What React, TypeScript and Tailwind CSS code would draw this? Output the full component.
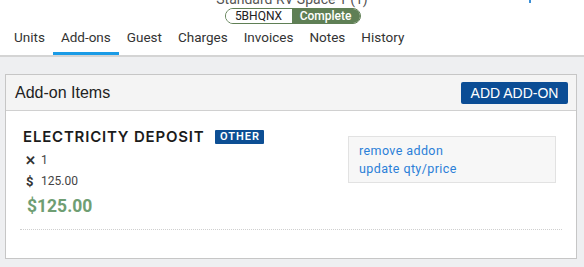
import React from "react";

export default function App() {
  const tabs = ["Units", "Add-ons", "Guest", "Charges", "Invoices", "Notes", "History"];
  return (
    <div className="w-[584px] h-[267px] overflow-hidden bg-[#eeeff1] relative" style={{ fontFamily: "Roboto, 'Open Sans', sans-serif" }}>
      <div className="bg-white border-b-2 border-[#d4d4d4] relative">
        <div className="h-[6px] relative overflow-visible">
          <div className="absolute left-0 right-0 -top-[9px] text-center text-[14px] text-[#555] leading-[16px]">Standard RV Space 1 (1)</div>
          <div className="absolute left-[529px] top-0 w-[2px] h-[3px] bg-[#3b8fd6]"></div>
        </div>
        <div className="flex justify-center pt-[2px]">
          <div className="flex h-[16px] ml-[1px] rounded-full border border-[#5f7f55] overflow-hidden text-[12px] leading-[14px]">
            <div className="w-[66px] bg-white text-[#222] text-center">5BHQNX</div>
            <div className="w-[68px] bg-[#5f7f55] text-white text-center font-medium">Complete</div>
          </div>
        </div>
        <div className="flex pl-[6px] mt-[4px] h-[27px] text-[13.5px] text-[#333] leading-[16px]">
          {tabs.map((t) => (
            <div key={t} className={`px-[8px] pt-[1px] ${t === "Add-ons" ? "border-b-[3px] border-[#1a9be6]" : ""}`}>
              {t}
            </div>
          ))}
        </div>
      </div>
      <div className="px-[5px] pt-[17px]">
        <div className="bg-white border border-[#c6c6c6] h-[185px] w-[572px]">
          <div className="bg-[#f4f4f4] border-b border-[#d0d0d0] h-[36px] flex items-center justify-between pl-[9px] pr-[8px]" style={{ fontFamily: "'Liberation Sans', Arial, sans-serif" }}>
            <div className="text-[16px] text-[#222]">Add-on Items</div>
            <button className="bg-[#0b4d95] text-white text-[14px] h-[22px] w-[107px] rounded-[2px] leading-[22px]">ADD ADD-ON</button>
          </div>
          <div className="px-[14px] pt-[18px]">
            <div className="flex justify-between border-b border-dotted border-[#cfcfcf] pb-[12px]">
              <div className="pl-[3px]">
                <div className="flex items-center">
                  <span className="text-[15px] font-semibold tracking-[0.8px] text-[#1b1b1b] leading-[16px]" style={{ fontFamily: "Inter, 'Open Sans', sans-serif" }}>ELECTRICITY DEPOSIT</span>
                  <span className="ml-[11px] bg-[#0d4f94] text-white text-[11px] font-semibold tracking-[1px] w-[49px] text-center leading-[14px] rounded-[1px]">OTHER</span>
                </div>
                <div className="flex items-center mt-[8px] text-[12px] text-[#444] leading-[15px]">
                  <span className="text-[#333] font-bold text-[13px] w-[18px] pl-[2px]">✕</span>
                  <span>1</span>
                </div>
                <div className="flex items-center mt-[6px] text-[12px] text-[#444] leading-[15px]">
                  <span className="text-[#333] font-bold text-[13px] w-[18px] pl-[3px]">$</span>
                  <span>125.00</span>
                </div>
                <div className="text-[17.5px] font-bold text-[#6f9e73] mt-[6px] leading-[22px] pl-[4px]">$125.00</div>
              </div>
              <div className="mt-[7px] mr-[6px] w-[208px] h-[47px] bg-[#f7f7f7] border border-[#e2e2e2] pl-[10px] pt-[5px] text-[12.5px] tracking-[0.4px] text-[#2b80d8] leading-[18px] self-start">
                <div>remove addon</div>
                <div>update qty/price</div>
              </div>
            </div>
          </div>
        </div>
      </div>
    </div>
  );
}
